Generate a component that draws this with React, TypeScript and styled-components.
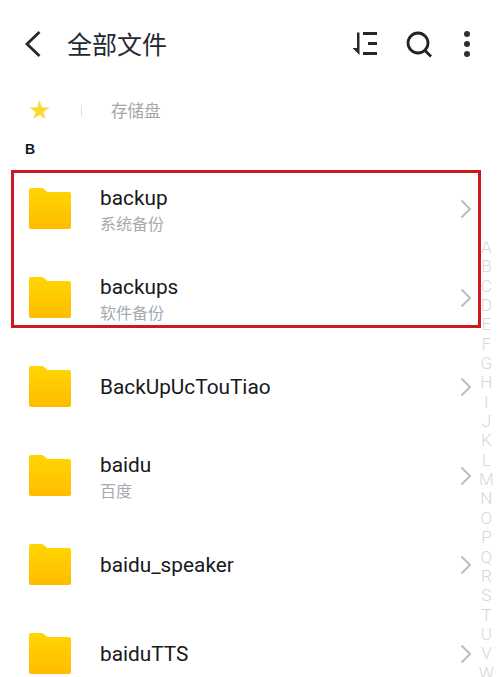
import React from "react";
import styled, { createGlobalStyle } from "styled-components";

const folders = [
  { name: "backup", note: "系统备份" },
  { name: "backups", note: "软件备份" },
  { name: "BackUpUcTouTiao" },
  { name: "baidu", note: "百度" },
  { name: "baidu_speaker" },
  { name: "baiduTTS" },
];

const letters = "ABCDEFGHIJKLMNOPQRSTUVW".split("");

function FolderIcon() {
  return (
    <svg width="42" height="41" viewBox="0 0 42 41">
      <defs>
        <linearGradient id="folderFill" x1="0" y1="0" x2="0" y2="1">
          <stop offset="0" stopColor="#ffd600" />
          <stop offset="1" stopColor="#ffbc00" />
        </linearGradient>
      </defs>
      <path
        d="M2 0h10.5c1 0 1.7.4 2.4 1l3.6 3H40c1.2 0 2 .8 2 2v33c0 1.2-.8 2-2 2H2c-1.2 0-2-.8-2-2V2C0 .8.8 0 2 0z"
        fill="url(#folderFill)"
      />
    </svg>
  );
}

function Chevron() {
  return (
    <svg width="12" height="20" viewBox="0 0 12 20" fill="none">
      <path d="M1.5 1.5L10 10l-8.500 8.500" stroke="#b9bec3" strokeWidth="2" />
    </svg>
  );
}

export default function App() {
  return (
    <Page>
      <GlobalStyle />
      <TopBar>
        <BackButton>
          <svg width="18" height="28" viewBox="0 0 18 28" fill="none">
            <path d="M15.500 2L3 14l12.500 12" stroke="#23282d" strokeWidth="2.800" />
          </svg>
        </BackButton>
        <Title>全部文件</Title>
        <Actions>
          <svg width="26" height="24" viewBox="0 0 26 24" fill="none">
            <path d="M11 1.500h14M16 11.500h9M11 21.500h14" stroke="#23282d" strokeWidth="2.800" />
            <path d="M7.500 0.500V23L0.500 16H5V0.500z" fill="#23282d" />
          </svg>
          <svg width="27" height="27" viewBox="0 0 27 27" fill="none">
            <circle cx="12" cy="12" r="10" stroke="#1f2428" strokeWidth="2.800" />
            <path d="M18.500 19l6.500 6.500" stroke="#1f2428" strokeWidth="2.800" />
          </svg>
          <Dots>
            <span />
            <span />
            <span />
          </Dots>
        </Actions>
      </TopBar>

      <Breadcrumb>
        <Star>★</Star>
        <Divider />
        <Crumb>存储盘</Crumb>
      </Breadcrumb>

      <SectionLetter>B</SectionLetter>

      <List>
        <Highlight />
        {folders.map((folder) => (
          <Row key={folder.name}>
            <FolderIcon />
            <RowText>
              <RowName>{folder.name}</RowName>
              {folder.note && <RowNote>{folder.note}</RowNote>}
            </RowText>
            <Chevron />
          </Row>
        ))}
      </List>

      <LetterIndex>
        {letters.map((letter) => (
          <span key={letter}>{letter}</span>
        ))}
      </LetterIndex>
    </Page>
  );
}

/* Styles */

const GlobalStyle = createGlobalStyle`
  html, body {
    margin: 0;
    padding: 0;
    background: #fff;
  }
`;

const Page = styled.div`
  position: relative;
  width: 500px;
  height: 677px;
  overflow: hidden;
  background: #fff;
  font-family: "Liberation Sans", "Noto Sans CJK SC", sans-serif;
`;

const TopBar = styled.div`
  display: flex;
  align-items: center;
  height: 88px;
  padding: 0 30px 0 24px;
  box-sizing: border-box;
`;

const BackButton = styled.div`
  display: flex;
  width: 43px;
`;

const Title = styled.div`
  flex: 1;
  margin-top: -3px;
  font-family: "Noto Sans CJK SC", sans-serif;
  font-size: 25px;
  color: #23282d;
`;

const Actions = styled.div`
  display: flex;
  align-items: center;
  gap: 28px;
`;

const Dots = styled.div`
  display: flex;
  flex-direction: column;
  gap: 4px;
  margin-left: 3px;

  span {
    width: 6px;
    height: 6px;
    border-radius: 50%;
    background: #2b3036;
  }
`;

const Breadcrumb = styled.div`
  display: flex;
  align-items: center;
  height: 44px;
  padding-left: 28px;
`;

const Star = styled.div`
  width: 24px;
  font-family: "DejaVu Sans", sans-serif;
  font-size: 26px;
  line-height: 44px;
  color: #fbd92f;
`;

const Divider = styled.div`
  width: 1px;
  height: 11px;
  margin-left: 29px;
  background: #dcdfe2;
`;

const Crumb = styled.div`
  margin-left: 29px;
  font-family: "Noto Sans CJK SC", sans-serif;
  font-size: 16.5px;
  color: #a0a6ac;
`;

const SectionLetter = styled.div`
  height: 32px;
  padding: 8px 0 0 25px;
  box-sizing: border-box;
  font-size: 14px;
  font-weight: 700;
  line-height: 18px;
  color: #15181b;
`;

const List = styled.div`
  position: relative;
`;

const Highlight = styled.div`
  position: absolute;
  top: 6px;
  left: 11px;
  width: 470px;
  height: 158px;
  box-sizing: border-box;
  border: 3px solid #d2161e;
`;

const Row = styled.div`
  display: flex;
  align-items: center;
  height: 89px;
  padding: 0 28px 0 29px;
  box-sizing: border-box;
`;

const RowText = styled.div`
  flex: 1;
  display: flex;
  flex-direction: column;
  gap: 1px;
  margin-left: 29px;
`;

const RowName = styled.div`
  margin-top: 1px;
  font-family: "Roboto", sans-serif;
  font-size: 20.8px;
  line-height: 26px;
  color: #16191c;
`;

const RowNote = styled.div`
  font-family: "Noto Sans CJK SC", sans-serif;
  font-size: 16px;
  line-height: 22px;
  color: #a3aab0;
`;

const LetterIndex = styled.div`
  position: absolute;
  top: 238px;
  right: 6px;
  display: flex;
  flex-direction: column;
  align-items: center;
  font-family: "Roboto", sans-serif;
  font-size: 17px;
  font-weight: 300;
  line-height: 19.35px;
  color: #d4d8db;
`;
